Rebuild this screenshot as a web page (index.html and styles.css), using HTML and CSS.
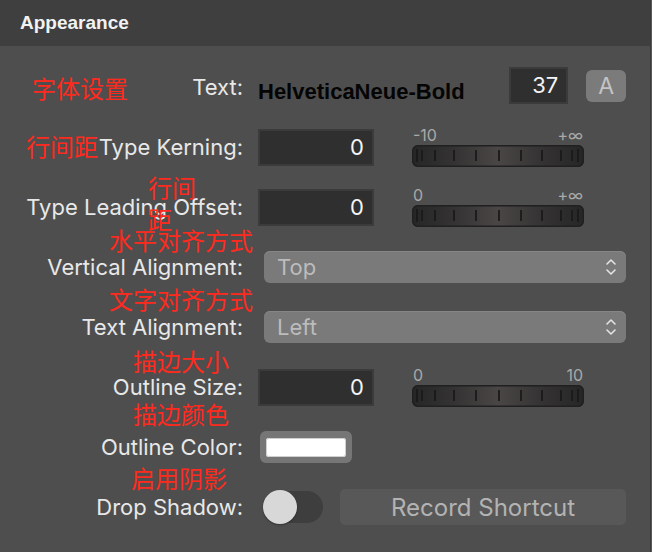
FILE: index.html
```html
<!DOCTYPE html>
<html lang="en">
<head>
<meta charset="utf-8">
<title>Appearance</title>
<link rel="stylesheet" href="styles.css">
</head>
<body>
<div class="panel">
  <div class="head">Appearance</div>
  <div class="form">
    <div class="lbl">Text:</div>
    <div class="ctl">
      <span class="fontname">HelveticaNeue-Bold</span>
      <div class="num num-size">37</div>
      <div class="abtn">A</div>
    </div>

    <div class="lbl">Type Kerning:</div>
    <div class="ctl">
      <div class="num num-wide">0</div>
      <div class="slider">
        <div class="slider-lbls"><span>-10</span><span>+∞</span></div>
        <div class="track">
          <svg width="172" height="22" viewBox="0 0 172 22"><g stroke="#1a1a1a" stroke-width="1.8"><line x1="5" y1="4" x2="5" y2="17"/><line x1="10" y1="5" x2="10" y2="16"/><line x1="23" y1="5" x2="23" y2="16"/><line x1="42" y1="5" x2="42" y2="16"/><line x1="64" y1="5" x2="64" y2="16"/><line x1="87" y1="5" x2="87" y2="16"/><line x1="109" y1="5" x2="109" y2="16"/><line x1="130" y1="5" x2="130" y2="16"/><line x1="149" y1="5" x2="149" y2="16"/><line x1="160" y1="5" x2="160" y2="16"/><line x1="166" y1="4" x2="166" y2="17"/></g></svg>
        </div>
      </div>
    </div>

    <div class="lbl">Type Leading Offset:</div>
    <div class="ctl">
      <div class="num num-wide">0</div>
      <div class="slider">
        <div class="slider-lbls"><span>0</span><span>+∞</span></div>
        <div class="track">
          <svg width="172" height="22" viewBox="0 0 172 22"><g stroke="#1a1a1a" stroke-width="1.8"><line x1="5" y1="4" x2="5" y2="17"/><line x1="10" y1="5" x2="10" y2="16"/><line x1="23" y1="5" x2="23" y2="16"/><line x1="42" y1="5" x2="42" y2="16"/><line x1="64" y1="5" x2="64" y2="16"/><line x1="87" y1="5" x2="87" y2="16"/><line x1="109" y1="5" x2="109" y2="16"/><line x1="130" y1="5" x2="130" y2="16"/><line x1="149" y1="5" x2="149" y2="16"/><line x1="160" y1="5" x2="160" y2="16"/><line x1="166" y1="4" x2="166" y2="17"/></g></svg>
        </div>
      </div>
    </div>

    <div class="lbl">Vertical Alignment:</div>
    <div class="ctl">
      <div class="popup"><span>Top</span>
        <svg class="chev" width="12" height="20" viewBox="0 0 12 20"><path d="M2 7 L6 3 L10 7 M2 13 L6 17 L10 13" fill="none" stroke="#e4e4e4" stroke-width="1.6" stroke-linecap="round" stroke-linejoin="round"/></svg>
      </div>
    </div>

    <div class="lbl">Text Alignment:</div>
    <div class="ctl">
      <div class="popup"><span>Left</span>
        <svg class="chev" width="12" height="20" viewBox="0 0 12 20"><path d="M2 7 L6 3 L10 7 M2 13 L6 17 L10 13" fill="none" stroke="#e4e4e4" stroke-width="1.6" stroke-linecap="round" stroke-linejoin="round"/></svg>
      </div>
    </div>

    <div class="lbl">Outline Size:</div>
    <div class="ctl">
      <div class="num num-wide">0</div>
      <div class="slider">
        <div class="slider-lbls"><span>0</span><span>10</span></div>
        <div class="track">
          <svg width="172" height="22" viewBox="0 0 172 22"><g stroke="#1a1a1a" stroke-width="1.8"><line x1="5" y1="4" x2="5" y2="17"/><line x1="10" y1="5" x2="10" y2="16"/><line x1="23" y1="5" x2="23" y2="16"/><line x1="42" y1="5" x2="42" y2="16"/><line x1="64" y1="5" x2="64" y2="16"/><line x1="87" y1="5" x2="87" y2="16"/><line x1="109" y1="5" x2="109" y2="16"/><line x1="130" y1="5" x2="130" y2="16"/><line x1="149" y1="5" x2="149" y2="16"/><line x1="160" y1="5" x2="160" y2="16"/><line x1="166" y1="4" x2="166" y2="17"/></g></svg>
        </div>
      </div>
    </div>

    <div class="lbl">Outline Color:</div>
    <div class="ctl">
      <div class="well"><div class="well-in"></div></div>
    </div>

    <div class="lbl">Drop Shadow:</div>
    <div class="ctl">
      <div class="toggle"><div class="knob"></div></div>
      <div class="record">Record Shortcut</div>
    </div>

    <div class="note n1">字体设置</div>
    <div class="note n2">行间距</div>
    <div class="note n3">行间距</div>
    <div class="note n4">水平对齐方式</div>
    <div class="note n5">文字对齐方式</div>
    <div class="note n6">描边大小</div>
    <div class="note n7">描边颜色</div>
    <div class="note n8">启用阴影</div>
  </div>
</div>
</body>
</html>
```

FILE: styles.css
```css
html, body {
  margin: 0;
  padding: 0;
  background: #5a5a5a;
}
body {
  width: 652px;
  height: 552px;
  overflow: hidden;
  font-family: Inter, "Liberation Sans", sans-serif;
}
.panel {
  width: 650px;
  height: 552px;
  background: #4e4e4e;
  border-right: 1px solid #3a3a3a;
}
.head {
  height: 46px;
  background: #3f3f3f;
  color: #f2f2f2;
  font-family: "Liberation Sans", Arial, sans-serif;
  font-weight: 700;
  font-size: 19px;
  line-height: 45px;
  padding-left: 20px;
  box-sizing: border-box;
}
.form {
  position: relative;
  display: grid;
  grid-template-columns: 243px 368px;
  column-gap: 15px;
  grid-auto-rows: 60px;
  padding-top: 11px;
}
.lbl {
  text-align: right;
  color: #e8e8e8;
  font-size: 22px;
  align-self: center;
  white-space: nowrap;
}
.ctl {
  display: flex;
  align-items: center;
}
.fontname {
  width: 252px;
  font-family: "Liberation Sans", Arial, sans-serif;
  font-weight: 700;
  font-size: 22px;
  color: #050505;
  padding-top: 10px;
}
.num {
  box-sizing: border-box;
  height: 37px;
  background: #2f2f2f;
  border: 2px solid #3b3b3b;
  color: #f4f4f4;
  font-size: 22px;
  text-align: right;
  padding-right: 8px;
  line-height: 33px;
}
.num-size {
  width: 60px;
  margin-top: -4px;
}
.num-wide {
  width: 116px;
}
.abtn {
  margin-left: 18px;
  width: 40px;
  height: 32px;
  border-radius: 6px;
  background: #7b7b7b;
  color: #c4c4c4;
  font-size: 23px;
  text-align: center;
  line-height: 33px;
  margin-top: -2px;
}
.slider {
  margin-left: 38px;
  width: 172px;
}
.slider-lbls {
  display: flex;
  justify-content: space-between;
  color: #a9a9a9;
  font-size: 16px;
  line-height: 16px;
  height: 18px;
  padding: 0 1px;
}
.track {
  height: 22px;
  box-sizing: border-box;
  border-radius: 6px;
  background: linear-gradient(90deg, #262626 0%, #353333 25%, #4a4646 50%, #353333 75%, #262626 100%);
  box-shadow: inset 0 0 0 1.5px #202020;
}
.track svg {
  display: block;
}
.popup {
  margin-left: 6px;
  box-sizing: border-box;
  width: 362px;
  height: 32px;
  border-radius: 6px;
  background: #7a7a7a;
  box-shadow: inset 0 1px 0 #868686;
  display: flex;
  align-items: center;
  justify-content: space-between;
  padding: 0 9px 0 13px;
  color: #bcbcbc;
  font-size: 22px;
}
.chev {
  display: block;
}
.well {
  margin-left: 2px;
  width: 92px;
  height: 32px;
  border-radius: 6px;
  background: #767676;
  display: flex;
  align-items: center;
  justify-content: center;
}
.well-in {
  width: 80px;
  height: 19px;
  border-radius: 3px;
  background: #ffffff;
  box-shadow: inset 0 0 0 1px #d0d0d0;
}
.toggle {
  margin-left: 5px;
  width: 60px;
  height: 32px;
  border-radius: 16px;
  background: #3e3e3e;
  position: relative;
}
.knob {
  position: absolute;
  left: 0;
  top: -1px;
  width: 34px;
  height: 34px;
  border-radius: 50%;
  background: #d8d8d8;
  box-shadow: 0 1px 2px rgba(0,0,0,0.35);
}
.record {
  margin-left: 17px;
  width: 286px;
  height: 36px;
  border-radius: 5px;
  background: #585858;
  color: #b3b3b3;
  font-size: 24px;
  text-align: center;
  line-height: 37px;
}
.note {
  position: absolute;
  color: #ff2a1e;
  font-family: "Noto Sans CJK SC", sans-serif;
  font-size: 24px;
  line-height: 24px;
  white-space: nowrap;
}
.n1 { left: 32px; top: 30px; }
.n2 { left: 26px; top: 88px; }
.n3 { left: 148px; top: 125px; width: 48px; white-space: normal; line-height: 32px; }
.n4 { left: 109px; top: 182px; }
.n5 { left: 109px; top: 241px; }
.n6 { left: 133px; top: 303px; }
.n7 { left: 133px; top: 356px; }
.n8 { left: 131px; top: 420px; }
```
